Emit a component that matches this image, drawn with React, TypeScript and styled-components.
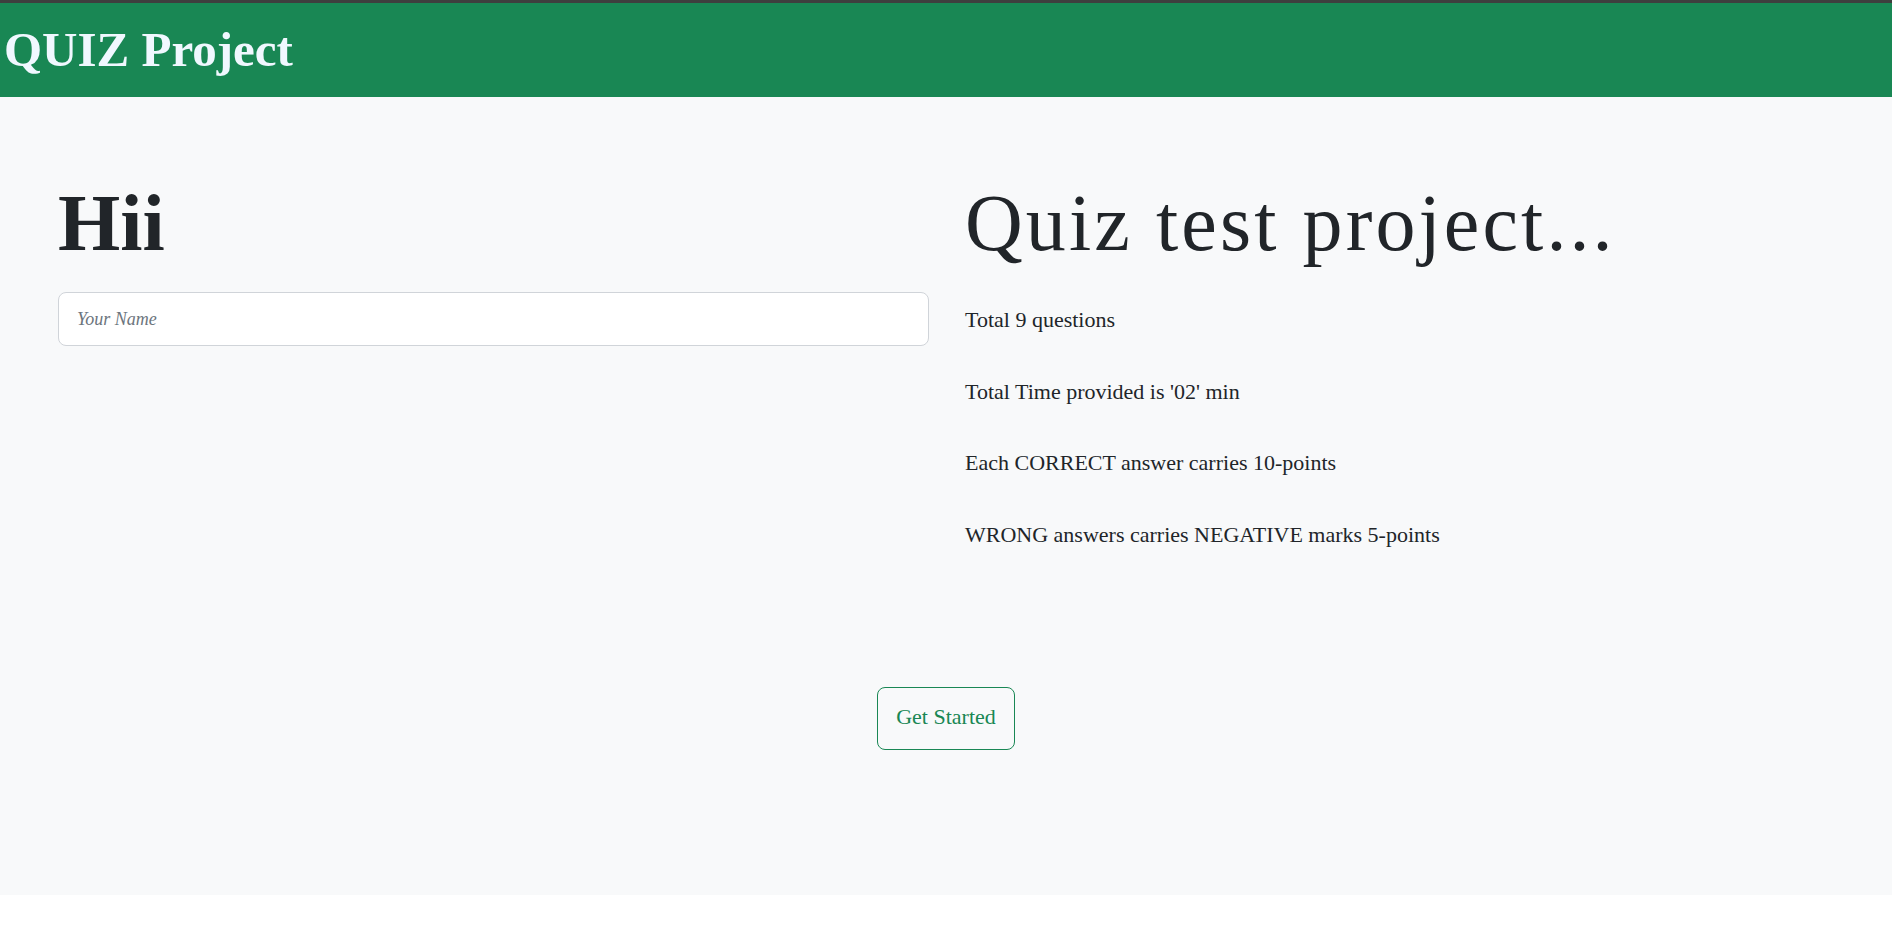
import React from "react";
import styled, { createGlobalStyle } from "styled-components";

const GlobalStyle = createGlobalStyle`
  html, body {
    margin: 0;
    padding: 0;
    background: #ffffff;
    color: #212529;
    font-family: "Liberation Serif", serif;
  }
  * { box-sizing: border-box; }
`;

const Header = styled.header`
  border-top: 3px solid #3e3e3e;
  background: #198754;
  height: 97px;
  padding: 18px 0 0 4px;
`;

const Brand = styled.h1`
  margin: 0;
  font-family: "Liberation Serif", serif;
  font-weight: 700;
  font-size: 49px;
  line-height: 1.2;
  color: #f0f8ff;
`;

const Main = styled.main`
  background: #f8f9fa;
  height: 798px;
  padding-top: 78px;
  display: flex;
  flex-direction: column;
`;

const Columns = styled.div`
  display: grid;
  grid-template-columns: 1fr 1fr;
  column-gap: 36px;
  padding: 0 56px 0 58px;
`;

const Column = styled.section`
  display: flex;
  flex-direction: column;
  align-items: flex-start;
`;

const Greeting = styled.h2`
  margin: 0;
  font-family: "Liberation Serif", serif;
  font-weight: 700;
  font-size: 80px;
  line-height: 96px;
  color: #212529;
`;

const Title = styled.h2`
  margin: 0;
  font-family: "Liberation Serif", serif;
  font-weight: 300;
  font-size: 80px;
  line-height: 96px;
  letter-spacing: 3.1px;
  color: #212529;
  white-space: nowrap;
`;

const NameInput = styled.input`
  margin-top: 21px;
  width: 100%;
  height: 54px;
  padding: 0 18px;
  border: 1px solid #d0d4d9;
  border-radius: 8px;
  background: #ffffff;
  font-family: "Liberation Serif", serif;
  font-size: 18px;
  color: #212529;
  outline: none;
  &::placeholder {
    font-style: italic;
    color: #6c757d;
  }
`;

const Rules = styled.div`
  margin-top: 34px;
  display: flex;
  flex-direction: column;
  gap: 41.5px;
`;

const Rule = styled.p`
  margin: 0;
  font-family: "Liberation Serif", serif;
  font-size: 22px;
  line-height: 30px;
  color: #212529;
`;

const Actions = styled.div`
  margin-top: 137px;
  display: flex;
  justify-content: center;
`;

const StartButton = styled.button`
  height: 63px;
  padding: 0 18px 3px;
  border: 1px solid #198754;
  border-radius: 8px;
  background: transparent;
  color: #198754;
  font-family: "Liberation Serif", serif;
  font-size: 22px;
  line-height: 1.5;
  cursor: pointer;
`;

const rules = [
  "Total 9 questions",
  "Total Time provided is '02' min",
  "Each CORRECT answer carries 10-points",
  "WRONG answers carries NEGATIVE marks 5-points",
];

export default function App() {
  return (
    <>
      <GlobalStyle />
      <Header>
        <Brand>QUIZ Project</Brand>
      </Header>
      <Main>
        <Columns>
          <Column>
            <Greeting>Hii</Greeting>
            <NameInput type="text" placeholder="Your Name" />
          </Column>
          <Column>
            <Title>Quiz test project...</Title>
            <Rules>
              {rules.map((r) => (
                <Rule key={r}>{r}</Rule>
              ))}
            </Rules>
          </Column>
        </Columns>
        <Actions>
          <StartButton type="button">Get Started</StartButton>
        </Actions>
      </Main>
    </>
  );
}
